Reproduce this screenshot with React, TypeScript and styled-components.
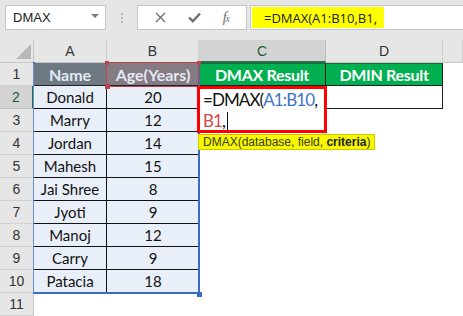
import React from "react";
import styled, { createGlobalStyle, css } from "styled-components";

const Global = createGlobalStyle`
  html, body {
    margin: 0;
    padding: 0;
    background: #ffffff;
    overflow: hidden;
  }
  body {
    width: 463px;
    height: 316px;
    font-family: "Liberation Sans", Arial, sans-serif;
  }
`;

const Page = styled.div`
  width: 463px;
  height: 316px;
  overflow: hidden;
`;

const Toolbar = styled.div`
  height: 40px;
  box-sizing: border-box;
  background: #e6e6e6;
  display: flex;
  align-items: flex-start;
  padding: 5px 0 0 5px;
`;

const Box = styled.div<{ $w?: number }>`
  box-sizing: border-box;
  height: 25px;
  ${(p) => (p.$w ? `width: ${p.$w}px;` : "flex: 1;")}
  background: #ffffff;
  border: 1px solid #c6c6c6;
  display: flex;
  align-items: center;
`;

const NameBox = styled(Box)`
  justify-content: space-between;
  padding: 0 6px 0 7px;
  font-size: 13px;
  color: #222;
`;

const Caret = styled.span`
  width: 0;
  height: 0;
  border-left: 4px solid transparent;
  border-right: 4px solid transparent;
  border-top: 4px solid #7a7a7a;
  margin-top: -3px;
`;

const Grip = styled.div`
  width: 31px;
  height: 25px;
  display: flex;
  flex-direction: column;
  align-items: center;
  justify-content: center;
  gap: 2px;
  span {
    width: 2px;
    height: 2px;
    background: #b4b4b4;
  }
`;

const FnBox = styled(Box)`
  justify-content: space-around;
  padding: 0 6px;
  color: #757575;
`;

const FxLabel = styled.span`
  font-family: "Liberation Serif", "Times New Roman", serif;
  font-style: italic;
  font-size: 14px;
  color: #6e6e6e;
  letter-spacing: -1px;
  sub {
    font-size: 10px;
    vertical-align: 0;
  }
`;

const FormulaBar = styled(Box)`
  margin-left: 3px;
  border-right: none;
  padding: 1px 0 1px 1px;
  align-items: stretch;
`;

const Highlight = styled.div`
  width: 132px;
  background: #ffff00;
  display: flex;
  align-items: center;
  padding-left: 12px;
  box-sizing: border-box;
  font-family: "Open Sans", "Liberation Sans", sans-serif;
  font-size: 13px;
  color: #222;
`;

const Sheet = styled.div`
  position: relative;
  display: grid;
  grid-template-columns: 34px 73px 92px 127px 117px 1fr;
  grid-auto-rows: 23px;
  font-family: Lato, "Liberation Sans", sans-serif;
`;

type Kind =
  | "corner"
  | "col"
  | "colSel"
  | "row"
  | "rowSel"
  | "thA"
  | "thB"
  | "green"
  | "data"
  | "dataA"
  | "boxed"
  | "blank";

const headFont = css`
  font-family: "Liberation Sans", Arial, sans-serif;
  font-size: 14px;
`;

const kinds: Record<Kind, ReturnType<typeof css>> = {
  corner: css`
    background: #e6e6e6;
    border-right: 1px solid #c6c6c6;
    border-bottom: 1px solid #c6c6c6;
  `,
  col: css`
    ${headFont}
    background: #e6e6e6;
    border-right: 1px solid #cfcfcf;
    border-bottom: 1px solid #c6c6c6;
    color: #333;
  `,
  colSel: css`
    ${headFont}
    background: #d3d3d3;
    border-right: 1px solid #bdbdbd;
    border-bottom: 2px solid #217346;
    color: #1c5a36;
  `,
  row: css`
    ${headFont}
    background: #e6e6e6;
    border-right: 1px solid #c6c6c6;
    border-bottom: 1px solid #d0d0d0;
    color: #333;
  `,
  rowSel: css`
    ${headFont}
    background: #d3d3d3;
    border-right: 2px solid #217346;
    border-bottom: 1px solid #bdbdbd;
    color: #1c5a36;
  `,
  thA: css`
    background: #6f7984;
    color: #e2eaf5;
    font-size: 16px;
    font-weight: 700;
    border-right: 1px solid #222;
    border-bottom: 1px solid #222;
  `,
  thB: css`
    background: #857b82;
    color: #e2eaf5;
    font-size: 16px;
    font-weight: 700;
    border-bottom: 1px solid #222;
  `,
  green: css`
    background: #00b050;
    color: #ffffff;
    font-size: 16px;
    font-weight: 700;
    letter-spacing: -0.3px;
    border-top: 1px solid #1b6e3c;
    border-right: 1px solid #1d1d1d;
    border-bottom: 1px solid #1d1d1d;
  `,
  data: css`
    background: #e9eff8;
    color: #111;
    border-bottom: 1px solid #111;
  `,
  dataA: css`
    background: #e9eff8;
    color: #111;
    border-right: 1px solid #111;
    border-bottom: 1px solid #111;
  `,
  boxed: css`
    background: #ffffff;
    border-right: 1px solid #1d1d1d;
    border-bottom: 1px solid #1d1d1d;
  `,
  blank: css`
    background: #ffffff;
  `,
};

const Cell = styled.div<{ $kind: Kind }>`
  box-sizing: border-box;
  display: flex;
  align-items: center;
  justify-content: center;
  font-size: 15px;
  white-space: nowrap;
  overflow: hidden;
  ${(p) => kinds[p.$kind]}
`;

const CornerMark = styled.span`
  align-self: flex-end;
  margin: 0 2px 3px auto;
  width: 0;
  height: 0;
  border-left: 15px solid transparent;
  border-bottom: 15px solid #b9b9b9;
`;

const RangeFrame = styled.div`
  position: absolute;
  left: 33px;
  top: 23px;
  width: 167px;
  height: 231px;
  box-sizing: border-box;
  border-left: 1px solid #6a8fd0;
  border-right: 2px solid #3a6cc6;
  border-bottom: 2px solid #3a6cc6;
  pointer-events: none;
`;

const Handle = styled.span<{ $c: string; $s: number; $x: number; $y: number }>`
  position: absolute;
  width: ${(p) => p.$s}px;
  height: ${(p) => p.$s}px;
  background: ${(p) => p.$c};
  left: ${(p) => p.$x}px;
  top: ${(p) => p.$y}px;
`;

const RefFrame = styled.div`
  position: absolute;
  left: 106px;
  top: 22px;
  width: 94px;
  height: 25px;
  box-sizing: border-box;
  border: 1px solid #c0424a;
  pointer-events: none;
`;

const EditBox = styled.div`
  position: absolute;
  left: 197px;
  top: 46px;
  width: 130px;
  height: 47px;
  box-sizing: border-box;
  border: 3px solid #ff0000;
  background: #ffffff;
  padding: 0 0 0 3px;
  font-size: 17px;
  line-height: 21px;
  letter-spacing: -0.9px;
  color: #111;
  white-space: nowrap;
`;

const Ref = styled.span<{ $c: string }>`
  color: ${(p) => p.$c};
`;

const Cursor = styled.span`
  display: inline-block;
  width: 1px;
  height: 18px;
  background: #111;
  vertical-align: -3px;
  margin-left: 2px;
`;

const Tip = styled.div`
  position: absolute;
  left: 198px;
  top: 94px;
  width: 177px;
  height: 16px;
  box-sizing: border-box;
  background: #f7f700;
  border: 1px solid #c9c900;
  font-family: "Liberation Sans", Arial, sans-serif;
  font-size: 12px;
  line-height: 14px;
  padding-left: 4px;
  color: #3a3a1a;
  white-space: nowrap;
  b {
    color: #222;
  }
`;

const rows: [string, string][] = [
  ["Donald", "20"],
  ["Marry", "12"],
  ["Jordan", "14"],
  ["Mahesh", "15"],
  ["Jai Shree", "8"],
  ["Jyoti", "9"],
  ["Manoj", "12"],
  ["Carry", "9"],
  ["Patacia", "18"],
];

const XIcon = () => (
  <svg width="11" height="11" viewBox="0 0 11 11">
    <path d="M1 1 L10 10 M10 1 L1 10" stroke="#707070" strokeWidth="1.4" />
  </svg>
);

const CheckIcon = () => (
  <svg width="13" height="11" viewBox="0 0 13 11">
    <path d="M1 5.5 L4.8 9.2 L12 1.5" stroke="#707070" strokeWidth="2.4" fill="none" />
  </svg>
);

export default function App() {
  return (
    <Page>
      <Global />
      <Toolbar>
        <NameBox $w={101}>
          DMAX
          <Caret />
        </NameBox>
        <Grip>
          <span />
          <span />
          <span />
        </Grip>
        <FnBox $w={110}>
          <XIcon />
          <CheckIcon />
          <FxLabel>
            f<sub>x</sub>
          </FxLabel>
        </FnBox>
        <FormulaBar>
          <Highlight>=DMAX(A1:B10,B1,</Highlight>
        </FormulaBar>
      </Toolbar>

      <Sheet>
        <Cell $kind="corner">
          <CornerMark />
        </Cell>
        <Cell $kind="col">A</Cell>
        <Cell $kind="col">B</Cell>
        <Cell $kind="colSel">C</Cell>
        <Cell $kind="col">D</Cell>
        <Cell $kind="col" />

        <Cell $kind="row">1</Cell>
        <Cell $kind="thA">Name</Cell>
        <Cell $kind="thB">Age(Years)</Cell>
        <Cell $kind="green">DMAX Result</Cell>
        <Cell $kind="green">DMIN Result</Cell>
        <Cell $kind="blank" />

        {rows.map(([name, age], i) => (
          <React.Fragment key={name}>
            <Cell $kind={i === 0 ? "rowSel" : "row"}>{i + 2}</Cell>
            <Cell $kind="dataA">{name}</Cell>
            <Cell $kind="data">{age}</Cell>
            <Cell $kind="blank" />
            <Cell $kind={i === 0 ? "boxed" : "blank"} />
            <Cell $kind="blank" />
          </React.Fragment>
        ))}

        <Cell $kind="row">11</Cell>
        <Cell $kind="blank" />
        <Cell $kind="blank" />
        <Cell $kind="blank" />
        <Cell $kind="blank" />
        <Cell $kind="blank" />

        <RangeFrame />
        <Handle $c="#3a6cc6" $s={5} $x={197} $y={252} />
        <Handle $c="#3a6cc6" $s={2} $x={33} $y={22} />
        <RefFrame />
        <Handle $c="#c0424a" $s={4} $x={105} $y={21} />
        <Handle $c="#c0424a" $s={5} $x={105} $y={44} />
        <Handle $c="#c0424a" $s={4} $x={197} $y={21} />

        <EditBox>
          =DMAX(<Ref $c="#3d73c9">A1:B10</Ref>,
          <br />
          <Ref $c="#cf4a4a">B1</Ref>,<Cursor />
        </EditBox>
        <Tip>
          DMAX(database, field, <b>criteria</b>)
        </Tip>
      </Sheet>
    </Page>
  );
}
